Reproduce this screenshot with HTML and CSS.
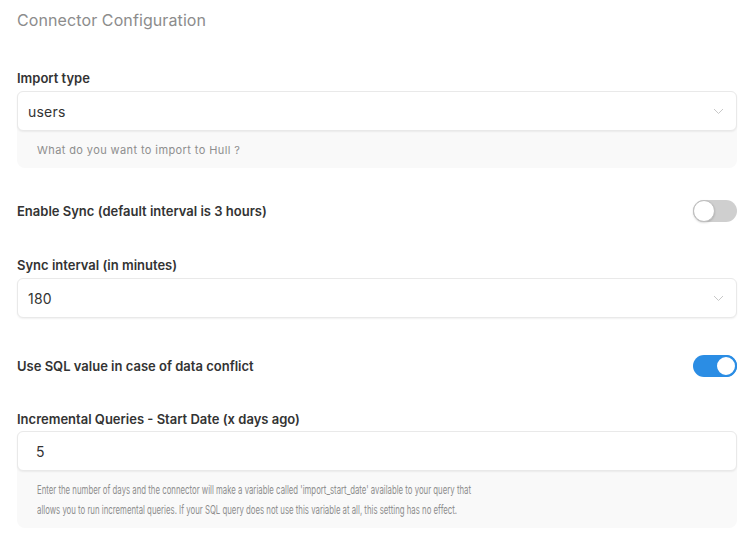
FILE: index.html
```html
<!DOCTYPE html>
<html>
<head>
<meta charset="utf-8">
<link rel="stylesheet" href="styles.css">
</head>
<body>
<div class="page">
  <h1 class="title">Connector Configuration</h1>

  <div class="field first">
    <div class="label">Import type</div>
    <div class="hintbox">
      <div class="control">
        <span class="value">users</span>
        <svg class="chev" width="11" height="7" viewBox="0 0 11 7"><path d="M1 1l4.5 4.5L10 1" fill="none" stroke="#c8c8c8" stroke-width="1"/></svg>
      </div>
      <div class="hint">What do you want to import to Hull ?</div>
    </div>
  </div>

  <div class="row r1">
    <div class="label">Enable Sync (default interval is 3 hours)</div>
    <div class="toggle"><div class="knob"></div></div>
  </div>

  <div class="field f2">
    <div class="label">Sync interval (in minutes)</div>
    <div class="control">
      <span class="value">180</span>
      <svg class="chev" width="11" height="7" viewBox="0 0 11 7"><path d="M1 1l4.5 4.5L10 1" fill="none" stroke="#c8c8c8" stroke-width="1"/></svg>
    </div>
  </div>

  <div class="row r2">
    <div class="label">Use SQL value in case of data conflict</div>
    <div class="toggle on"><div class="knob"></div></div>
  </div>

  <div class="field f3">
    <div class="label">Incremental Queries - Start Date (x days ago)</div>
    <div class="hintbox">
      <div class="control">
        <span class="value num">5</span>
      </div>
      <div class="hint narrow"><span class="squeeze">Enter the number of days and the connector will make a variable called 'import_start_date' available to your query that<br>allows you to run incremental queries. If your SQL query does not use this variable at all, this setting has no effect.</span></div>
    </div>
  </div>
</div>
</body>
</html>
```

FILE: styles.css
```css
html, body {
  margin: 0;
  padding: 0;
  background: #fff;
}
body {
  font-family: "Inter", "Open Sans", sans-serif;
  color: #333;
}
.page {
  width: 720px;
  margin-left: 17px;
  display: flex;
  flex-direction: column;
}
.title {
  margin: 10px 0 0;
  font-size: 16px;
  line-height: 20px;
  font-weight: 400;
  color: #8c8c8c;
  letter-spacing: 0.1px;
}
.label {
  font-size: 13px;
  line-height: 16px;
  font-weight: 600;
  color: #333;
}
.field .label {
  margin-bottom: 5px;
}
.field.first { margin-top: 40px; }
.field.f2 { margin-top: 35px; }
.field.f3 { margin-top: 34px; }
.field.f3 .label { margin-bottom: 4px; }
.hintbox {
  background: #f9f9f9;
  border-radius: 8px;
}
.control {
  height: 38px;
  border: 1px solid #e9e9e9;
  border-radius: 6px;
  background: #fff;
  box-shadow: 0 1px 2px rgba(0,0,0,0.06);
  display: flex;
  align-items: center;
  justify-content: space-between;
  padding: 0 12px 0 10px;
}
.value {
  font-size: 14px;
  color: #333;
  letter-spacing: 0.2px;
}
.value.num { padding-left: 8px; }
.chev { display: block; }
.hint {
  padding: 9px 20px 8px 20px;
  font-size: 11px;
  line-height: 20px;
  color: #8e8e8e;
  letter-spacing: 0.4px;
}
.hint.narrow {
  letter-spacing: 0;
  overflow: hidden;
  font-size: 11.5px;
}
.squeeze {
  display: block;
  width: 900px;
  white-space: nowrap;
  transform: scaleX(0.678);
  transform-origin: left top;
}
.row {
  display: flex;
  align-items: center;
  justify-content: space-between;
  height: 22px;
}
.row.r1 { margin-top: 32px; }
.row.r2 { margin-top: 37px; }
.toggle {
  width: 44px;
  height: 22px;
  border-radius: 11px;
  background: #cfcfcf;
  box-sizing: border-box;
  position: relative;
}
.knob {
  position: absolute;
  left: 0;
  top: 0;
  width: 22px;
  height: 22px;
  box-sizing: border-box;
  border-radius: 50%;
  background: #fff;
  border: 1px solid #bdbdbd;
  box-shadow: 0 1px 2px rgba(0,0,0,0.15);
}
.toggle.on {
  background: #2b8de4;
}
.toggle.on .knob {
  left: 22px;
  border: 2px solid #2b8de4;
  box-shadow: none;
}
```
